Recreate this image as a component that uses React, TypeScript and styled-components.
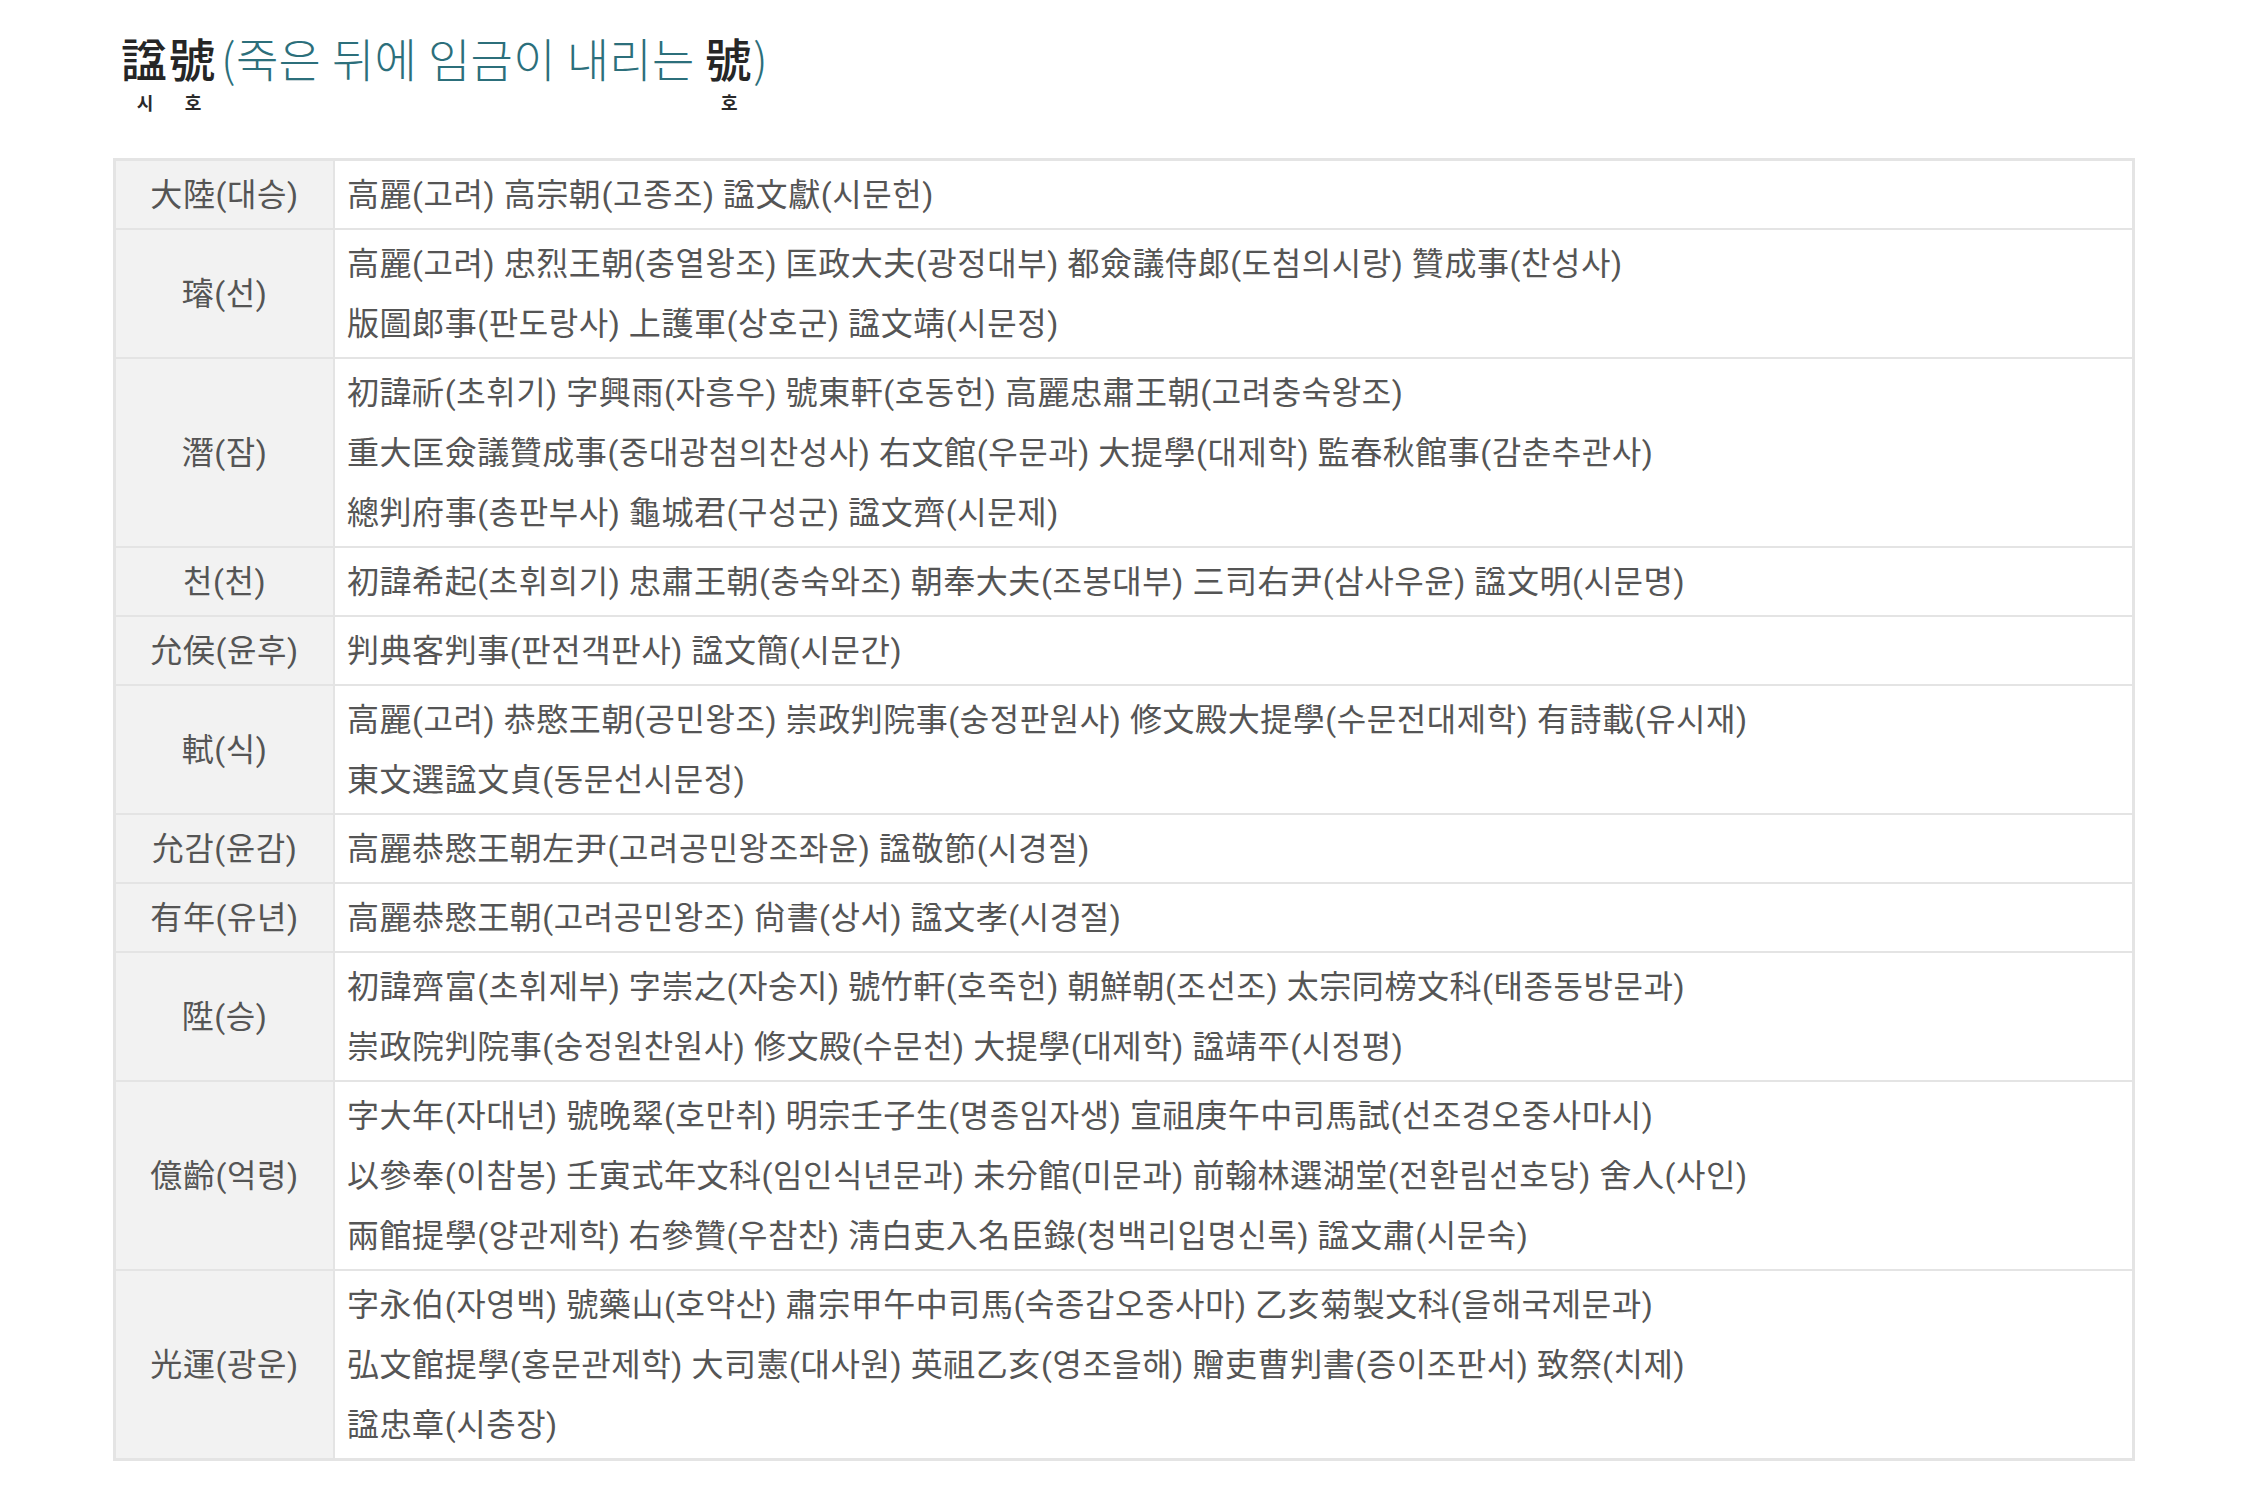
import styled, { createGlobalStyle } from "styled-components";

type Entry = { name: string; lines: string[] };

const ENTRIES: Entry[] = [
  { name: "大陸(대승)", lines: ["高麗(고려) 高宗朝(고종조) 諡文獻(시문헌)"] },
  {
    name: "璿(선)",
    lines: [
      "高麗(고려) 忠烈王朝(충열왕조) 匡政大夫(광정대부) 都僉議侍郞(도첨의시랑) 贊成事(찬성사)",
      "版圖郞事(판도랑사) 上護軍(상호군) 諡文靖(시문정)",
    ],
  },
  {
    name: "潛(잠)",
    lines: [
      "初諱祈(초휘기) 字興雨(자흥우) 號東軒(호동헌) 高麗忠肅王朝(고려충숙왕조)",
      "重大匡僉議贊成事(중대광첨의찬성사) 右文館(우문과) 大提學(대제학) 監春秋館事(감춘추관사)",
      "總判府事(총판부사) 龜城君(구성군) 諡文齊(시문제)",
    ],
  },
  {
    name: "천(천)",
    lines: ["初諱希起(초휘희기) 忠肅王朝(충숙와조) 朝奉大夫(조봉대부) 三司右尹(삼사우윤) 諡文明(시문명)"],
  },
  { name: "允侯(윤후)", lines: ["判典客判事(판전객판사) 諡文簡(시문간)"] },
  {
    name: "軾(식)",
    lines: [
      "高麗(고려) 恭愍王朝(공민왕조) 崇政判院事(숭정판원사) 修文殿大提學(수문전대제학) 有詩載(유시재)",
      "東文選諡文貞(동문선시문정)",
    ],
  },
  { name: "允감(윤감)", lines: ["高麗恭愍王朝左尹(고려공민왕조좌윤) 諡敬節(시경절)"] },
  { name: "有年(유년)", lines: ["高麗恭愍王朝(고려공민왕조) 尙書(상서) 諡文孝(시경절)"] },
  {
    name: "陞(승)",
    lines: [
      "初諱齊富(초휘제부) 字崇之(자숭지) 號竹軒(호죽헌) 朝鮮朝(조선조) 太宗同榜文科(태종동방문과)",
      "崇政院判院事(숭정원찬원사) 修文殿(수문천) 大提學(대제학) 諡靖平(시정평)",
    ],
  },
  {
    name: "億齡(억령)",
    lines: [
      "字大年(자대년) 號晩翠(호만취) 明宗壬子生(명종임자생) 宣祖庚午中司馬試(선조경오중사마시)",
      "以參奉(이참봉) 壬寅式年文科(임인식년문과) 未分館(미문과) 前翰林選湖堂(전환림선호당) 舍人(사인)",
      "兩館提學(양관제학) 右參贊(우참찬) 淸白吏入名臣錄(청백리입명신록) 諡文肅(시문숙)",
    ],
  },
  {
    name: "光運(광운)",
    lines: [
      "字永伯(자영백) 號藥山(호약산) 肅宗甲午中司馬(숙종갑오중사마) 乙亥菊製文科(을해국제문과)",
      "弘文館提學(홍문관제학) 大司憲(대사원) 英祖乙亥(영조을해) 贈吏曹判書(증이조판서) 致祭(치제)",
      "諡忠章(시충장)",
    ],
  },
];

const GlobalStyle = createGlobalStyle`
  body {
    margin: 0;
    background: #fff;
    font-family: Roboto, "Noto Sans CJK KR", sans-serif;
  }
`;

const Page = styled.main`
  padding: 34px 0 40px 113px;
`;

const Title = styled.h2`
  display: flex;
  align-items: flex-start;
  margin: 0 0 26px 8px;
  font-family: "Noto Sans CJK KR", sans-serif;
  font-weight: 400;
  font-size: 46px;
  line-height: 1;
  height: 98px;
`;

const Hanja = styled.ruby`
  color: #262626;
  font-weight: 500;
  ruby-position: under;
  letter-spacing: 2px;
  rt {
    font-size: 18px;
    line-height: 1;
    font-weight: 700;
    color: #2a2a2a;
    letter-spacing: 0;
    padding-top: 6px;
  }
`;

const Gloss = styled.span<{ $tight?: boolean }>`
  color: #2c6f7b;
  font-weight: 300;
  letter-spacing: 0.4px;
  white-space: pre;
  margin-left: ${(p) => (p.$tight ? "0" : "4px")};
`;

const Table = styled.table`
  width: 2022px;
  border-collapse: collapse;
  border: 3px solid #e4e4e4;
  font-size: 32px;
  letter-spacing: 0.55px;
  color: #555;
`;

const NameCell = styled.th`
  width: 217px;
  background: #f2f2f2;
  border: 2px solid #e4e4e4;
  font-weight: 400;
  text-align: center;
  vertical-align: middle;
  line-height: 60px;
  padding: 3.5px 0;
`;

const InfoCell = styled.td`
  border: 2px solid #e4e4e4;
  padding: 3.5px 12px;
  line-height: 60px;
  vertical-align: middle;
`;

const Line = styled.div`
  white-space: nowrap;
`;

export default function App() {
  return (
    <>
      <GlobalStyle />
      <Page>
        <Title>
          <Hanja>諡<rt>시</rt></Hanja>
          <Hanja>號<rt>호</rt></Hanja>
          <Gloss>(죽은 뒤에 임금이 내리는 </Gloss>
          <Hanja>號<rt>호</rt></Hanja>
          <Gloss $tight>)</Gloss>
        </Title>
        <Table>
          <tbody>
            {ENTRIES.map((e) => (
              <tr key={e.name}>
                <NameCell>{e.name}</NameCell>
                <InfoCell>
                  {e.lines.map((l) => (
                    <Line key={l}>{l}</Line>
                  ))}
                </InfoCell>
              </tr>
            ))}
          </tbody>
        </Table>
      </Page>
    </>
  );
}
